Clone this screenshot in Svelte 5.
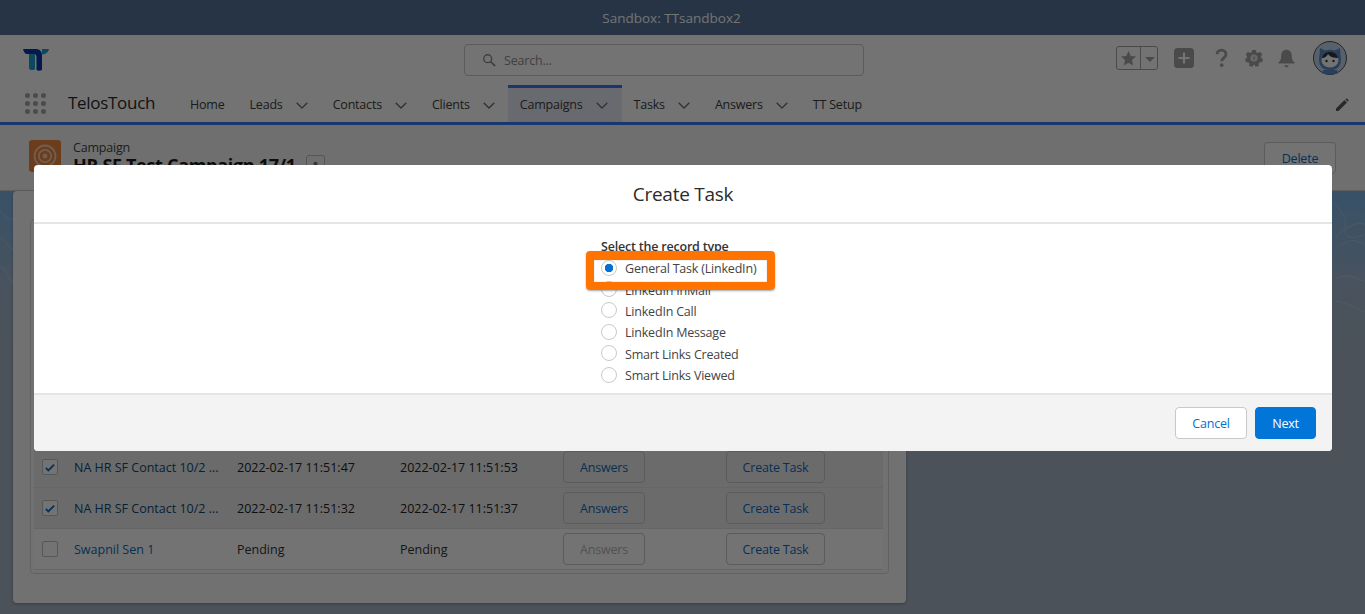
<script>
const navItems = [
    { label: 'Home' },
    { label: 'Leads', menu: true },
    { label: 'Contacts', menu: true },
    { label: 'Clients', menu: true },
    { label: 'Campaigns', menu: true, active: true },
    { label: 'Tasks', menu: true },
    { label: 'Answers', menu: true },
    { label: 'TT Setup' }
];

const members = [
    { name: 'NA HR SF Contact 10/2 ...', sent: '2022-02-17 11:51:47', done: '2022-02-17 11:51:53', checked: true },
    { name: 'NA HR SF Contact 10/2 ...', sent: '2022-02-17 11:51:32', done: '2022-02-17 11:51:37', checked: true },
    { name: 'Swapnil Sen 1', sent: 'Pending', done: 'Pending', checked: false }
];

const recordTypes = [
    'General Task (LinkedIn)',
    'LinkedIn InMail',
    'LinkedIn Call',
    'LinkedIn Message',
    'Smart Links Created',
    'Smart Links Viewed'
];

let recordType = $state(recordTypes[0]);
</script>

<div class="page">
    <svg class="contours" viewBox="0 0 1365 423" preserveAspectRatio="none" aria-hidden="true">
        <g fill="none" stroke="#d5e6f5" stroke-width="1" opacity="0.35">
            <path d="M1335 60c10-14 24-12 32-4" />
            <path d="M1335 46c14-12 22-16 32-12" />
            <path d="M1335 12c8 10 12 18 10 26s6 12 22 4" />
            <path d="M1335 88c12-6 20-2 32 4" />
            <path d="M1335 110c14 2 22 8 32 12" />
            <path d="M0 20c6 6 10 10 13 8" />
            <path d="M0 46c5 2 8 10 13 12" />
            <path d="M0 76c6 0 8 12 13 16" />
        </g>
    </svg>

    <div class="sandbox-bar">Sandbox: TTsandbox2</div>

    <header class="global-header">
        <svg class="logo" viewBox="0 0 27 24" aria-hidden="true">
            <path d="M1 1h13c3 0 6 2 6 6v15c-2 1-4 1-5.500 0V9c0-2-1-3-3-3H4C2.500 5 1.500 3 1 1z" fill="#0a3ab0" />
            <path d="M7 6h4.500c1 0 1.500.6 1.500 1.500V20c0 1-.5 1.800-1.500 2H9c-1-.2-2-1-2-3z" fill="#1b9fd0" />
            <path d="M20 1h7c-.5 2.500-2.500 5-7 5.500z" fill="#1b9fd0" />
        </svg>
        <div class="search">
            <svg viewBox="0 0 16 16" aria-hidden="true">
                <circle cx="6.500" cy="6.500" r="4.500" fill="none" stroke="#8a8a8a" stroke-width="1.600" />
                <path d="M10 10l4.500 4.500" stroke="#8a8a8a" stroke-width="2" stroke-linecap="round" />
            </svg>
            <span>Search...</span>
        </div>
        <div class="tools">
            <div class="favorites">
                <span class="fav-star">
                    <svg viewBox="0 0 16 16" aria-hidden="true"><path d="M8 1l2.100 4.700 5 .5-3.800 3.300 1.100 5L8 11.900 3.600 14.500l1.100-5L.9 6.200l5-.5z" fill="#a5a5a5" /></svg>
                </span>
                <span class="fav-caret"></span>
            </div>
            <svg class="tool plus" viewBox="0 0 20 20" aria-hidden="true">
                <rect width="20" height="20" rx="3.500" fill="#a5a5a5" />
                <path d="M10 4.500v11M4.500 10h11" stroke="#fff" stroke-width="2.200" />
            </svg>
            <svg class="tool help" viewBox="0 0 16 24" aria-hidden="true">
                <path d="M2.500 7.500c0-3 2.500-5.300 5.500-5.300s5.500 2.300 5.500 5.300c0 4.500-5.200 4-5.200 8.500" fill="none" stroke="#a5a5a5" stroke-width="3.400" />
                <circle cx="8.300" cy="20.800" r="2.200" fill="#a5a5a5" />
            </svg>
            <svg class="tool gear" viewBox="0 0 20 20" aria-hidden="true">
                <path d="M8 1h4l.6 2.600 1.900.8L16.800 3l2.400 3-1.600 2.100.3 1.900 2.100 1.200-1 3.600-2.500-.1-1.400 1.500.3 2.600-3.600 1-1.300-2.200h-1l-1.300 2.200-3.600-1 .3-2.600-1.400-1.500-2.500.1-1-3.600L2 10l.3-1.900L.8 6l2.400-3 2.300 1.400 1.900-.8z" fill="#a5a5a5" />
                <circle cx="10" cy="10" r="4" fill="#fff" opacity="0.75" />
                <path d="M10.800 6.800L8.500 10.500h1.600l-.8 2.800 2.300-3.800H10z" fill="#a5a5a5" />
            </svg>
            <svg class="tool bell" viewBox="0 0 20 20" aria-hidden="true">
                <path d="M10 .8c3.500 0 5.500 2.500 5.500 6 0 4 1 5.500 3 7.500v1h-17v-1c2-2 3-3.500 3-7.500 0-3.500 2-6 5.500-6z" fill="#a5a5a5" />
                <path d="M7.800 17h4.400c0 1.300-1 2.200-2.200 2.200S7.800 18.300 7.800 17z" fill="#a5a5a5" />
            </svg>
            <svg class="avatar" viewBox="0 0 34 34" aria-hidden="true">
                <circle cx="17" cy="17" r="16.500" fill="#c4d6ea" stroke="#555" stroke-width="1" />
                <path d="M7 7l5 2.500c3-1 7-1 10 0L27 7l.5 7c1 5 .5 10-3 13-4 3-11 3-15 0-3.500-3-4-8-3-13z" fill="#5d8fc8" />
                <path d="M10 29h14l1 3c-5 2-11 2-16 0z" fill="#5d8fc8" />
                <ellipse cx="17" cy="19.500" rx="8.500" ry="7" fill="#fff" />
                <path d="M9 17c3 0 5-2 6-4 2 3 6 4 10 4-1-4-4-6-8-6s-7 2-8 6z" fill="#2f3640" />
                <circle cx="13.500" cy="20" r="1.200" fill="#2f3640" />
                <circle cx="20.500" cy="20" r="1.200" fill="#2f3640" />
            </svg>
        </div>
    </header>

    <nav class="nav-bar">
        <div class="launcher" aria-hidden="true">
            {#each Array(9) as _}<span></span>{/each}
        </div>
        <span class="app-name">TelosTouch</span>
        <ul class="nav-items">
            {#each navItems as item}
                <li class:active={item.active}>
                    <span>{item.label}</span>
                    {#if item.menu}
                        <svg viewBox="0 0 12 7" aria-hidden="true"><path d="M.7.7L6 6l5.300-5.300" fill="none" stroke="#6e6e6e" stroke-width="1.300" /></svg>
                    {/if}
                </li>
            {/each}
        </ul>
        <svg class="edit" viewBox="0 0 14 14" aria-hidden="true">
            <path d="M1 10.500L9.500 2l2.500 2.500L3.500 13H1zM10.300 1.200l.7-.5c.4-.3.9-.3 1.200 0l1.100 1.100c.3.300.3.800 0 1.200l-.5.700z" fill="#5c5c5c" />
        </svg>
    </nav>

    <section class="record-header">
        <div class="record-icon">
            <svg viewBox="0 0 24 24" aria-hidden="true">
                <circle cx="12" cy="12" r="10.500" fill="none" stroke="#fff" stroke-width="1.800" opacity="0.6" />
                <circle cx="12" cy="12" r="6.200" fill="none" stroke="#fff" stroke-width="1.800" opacity="0.6" />
                <circle cx="12" cy="12" r="2.400" fill="#fff" opacity="0.6" />
            </svg>
        </div>
        <div class="record-title">
            <span class="record-type">Campaign</span>
            <div class="record-name">
                <strong>HR SF Test Campaign 17/1</strong>
                <span class="follow">
                    <svg viewBox="0 0 12 12" aria-hidden="true">
                        <circle cx="6" cy="3" r="2.300" fill="#777" />
                        <path d="M1.500 10c0-3 2-4.500 4.500-4.500s4.500 1.500 4.500 4.500z" fill="#777" />
                    </svg>
                </span>
            </div>
        </div>
        <button class="btn delete">Delete</button>
    </section>

    <main class="card">
        <div class="members">
            {#each members as member}
                <div class="row" class:selected={member.checked}>
                    <span class="checkbox">
                        {#if member.checked}
                            <svg viewBox="0 0 12 10" aria-hidden="true"><path d="M1 5.500l3 3L11 1.500" fill="none" stroke="#0070d2" stroke-width="2.200" /></svg>
                        {/if}
                    </span>
                    <a class="name" href="#top">{member.name}</a>
                    <span class="date">{member.sent}</span>
                    <span class="date">{member.done}</span>
                    <button class="btn answers" disabled={!member.checked}>Answers</button>
                    <button class="btn create">Create Task</button>
                </div>
            {/each}
        </div>
    </main>

    <div class="backdrop">
        <div class="modal">
            <h2>Create Task</h2>
            <div class="modal-body">
                <fieldset>
                    <legend>Select the record type</legend>
                    {#each recordTypes as type}
                        <label>
                            <input type="radio" name="recordType" value={type} bind:group={recordType} />
                            <span>{type}</span>
                        </label>
                    {/each}
                </fieldset>
                <div class="callout"></div>
            </div>
            <div class="modal-footer">
                <button class="btn cancel">Cancel</button>
                <button class="btn next">Next</button>
            </div>
        </div>
    </div>
</div>

<style>
:global(body) {
    margin: 0;
    overflow: hidden;
}

.page {
    position: relative;
    width: 1365px;
    height: 614px;
    overflow: hidden;
    font-family: "Open Sans", "Noto Sans", sans-serif;
    font-size: 12.5px;
    letter-spacing: -0.2px;
    color: #333;
    background: linear-gradient(180deg, #7cb4e6 191px, #a3b8cf 290px, #a6b5c6 340px);
}

.contours {
    position: absolute;
    left: 0;
    top: 191px;
    width: 1365px;
    height: 423px;
}

.sandbox-bar {
    height: 35px;
    display: flex;
    align-items: center;
    justify-content: center;
    box-sizing: border-box;
    padding-right: 22px;
    background: #56739b;
    color: #fff;
    font-size: 13.5px;
    letter-spacing: 0;
    position: relative;
}

.global-header {
    position: relative;
    height: 50px;
    display: flex;
    align-items: flex-start;
    background: #fff;
}

.logo {
    width: 27px;
    height: 24px;
    margin: 13px 0 0 22px;
}

.search {
    position: absolute;
    left: 464px;
    top: 9px;
    display: flex;
    align-items: center;
    gap: 8px;
    padding-left: 17px;
    box-sizing: border-box;
    width: 400px;
    height: 32px;
    border: 1px solid #c9c9c9;
    border-radius: 4px;
    color: #8f8f8f;
}

.search svg {
    width: 14px;
    height: 14px;
}

.tools {
    margin-left: auto;
    display: flex;
    align-items: center;
    height: 46px;
    padding-right: 18px;
}

.favorites {
    display: flex;
    width: 42px;
    height: 24px;
    box-sizing: border-box;
    border: 1px solid #a5a5a5;
    border-radius: 3px;
    margin-right: 16px;
}

.fav-star {
    width: 23px;
    display: flex;
    align-items: center;
    justify-content: center;
    border-right: 1px solid #a5a5a5;
}

.fav-star svg {
    width: 17px;
    height: 17px;
}

.fav-caret {
    align-self: center;
    margin: 2px 0 0 4px;
    width: 0;
    height: 0;
    border: 5px solid transparent;
    border-top: 5px solid #a5a5a5;
    border-bottom: 0;
    flex: none;
}

.tool {
    flex: none;
}

.plus {
    width: 20px;
    height: 20px;
    margin-right: 21px;
}

.help {
    width: 13px;
    height: 20px;
    margin-right: 17px;
}

.gear {
    width: 18px;
    height: 18px;
    margin-right: 14px;
}

.bell {
    width: 19px;
    height: 19px;
    margin-right: 17px;
}

.avatar {
    width: 34px;
    height: 34px;
}

.nav-bar {
    height: 40px;
    box-sizing: border-box;
    display: flex;
    align-items: stretch;
    background: #fff;
    border-bottom: 3px solid #3a78f5;
    position: relative;
}

.launcher {
    width: 21px;
    height: 21px;
    margin: 8px 0 0 25px;
    display: grid;
    grid-template-columns: repeat(3, 5px);
    grid-template-rows: repeat(3, 5px);
    gap: 3px;
}

.launcher span {
    border-radius: 50%;
    background: #a6a6a6;
}

.app-name {
    margin: 6px 0 0 22px;
    font-size: 17px;
    letter-spacing: -0.3px;
    color: #2c2c2c;
    width: 110px;
}

.nav-items {
    display: flex;
    margin: 0;
    padding: 0;
    list-style: none;
}

.nav-items li {
    display: flex;
    align-items: center;
    gap: 13px;
    padding: 1px 13px 0 12px;
    height: 37px;
    box-sizing: border-box;
    color: #3d3d3d;
}

.nav-items li.active {
    background: #e6ecf7;
    border-top: 3px solid #3a78f5;
    padding: 0 14px 1px 12px;
}

.nav-items svg {
    width: 12px;
    height: 7px;
    margin-top: 2px;
}

.edit {
    width: 14px;
    height: 14px;
    position: absolute;
    right: 16px;
    top: 13px;
}

.record-header {
    height: 66px;
    display: flex;
    align-items: flex-start;
    box-sizing: border-box;
    padding: 15px 29px 0;
    background: #f6f6f6;
    border-bottom: 1px solid #d0d0d0;
}

.record-icon {
    width: 32px;
    height: 32px;
    border-radius: 3px;
    background: #f0883f;
    display: flex;
    align-items: center;
    justify-content: center;
    flex: none;
}

.record-icon svg {
    width: 24px;
    height: 24px;
}

.record-title {
    margin-left: 12px;
    display: flex;
    flex-direction: column;
}

.record-type {
    color: #444;
    line-height: 15px;
}

.record-name {
    display: flex;
    gap: 10px;
    align-items: flex-start;
}

.record-name strong {
    font-size: 18px;
    line-height: 21px;
    color: #1c1c1c;
    letter-spacing: -0.3px;
}

.follow {
    width: 19px;
    height: 24px;
    box-sizing: border-box;
    border: 1px solid #bdbdbd;
    border-radius: 3px;
    display: flex;
    justify-content: center;
    padding-top: 5px;
}

.follow svg {
    width: 11px;
    height: 11px;
}

.btn {
    box-sizing: border-box;
    font: inherit;
    letter-spacing: inherit;
    height: 32px;
    border: 1px solid #c9c9c9;
    border-radius: 4px;
    background: transparent;
    color: #0b6cc4;
    padding: 0;
}

.delete {
    margin: 2px 0 0 auto;
    width: 72px;
    background: #fff;
}

.card {
    box-sizing: border-box;
    width: 893px;
    height: 412px;
    margin-left: 13px;
    padding: 28px 17px 29px;
    background: #fafafa;
    border-radius: 4px;
    box-shadow: 0 1px 3px rgba(0, 0, 0, 0.25);
}

.members {
    box-sizing: border-box;
    height: 355px;
    padding: 0 3px 3px;
    border: 1px solid #dadada;
    border-radius: 4px;
    display: flex;
    flex-direction: column;
    justify-content: flex-end;
}

.row {
    height: 41px;
    display: grid;
    grid-template-columns: 16px 163px 163px 163px 163px 99px;
    align-items: center;
    padding-left: 8px;
    box-sizing: border-box;
    border-bottom: 1px solid #e2e2e2;
    background: #fff;
    margin-right: 2px;
}

.row.selected {
    background: #eeeeee;
    color: #222;
}

.name,
.date {
    white-space: nowrap;
    letter-spacing: 0;
}

.name {
    margin-left: 16px;
    color: #0b6cc4;
    text-decoration: none;
}

.date {
    margin-left: 16px;
}

.row.selected .name {
    color: #0d4a78;
}

.checkbox {
    width: 16px;
    height: 16px;
    box-sizing: border-box;
    border: 1px solid #c2c2c2;
    border-radius: 2px;
    background: #fff;
    display: flex;
    align-items: center;
    justify-content: center;
}

.checkbox svg {
    width: 10px;
    height: 9px;
}

.answers {
    margin-left: 16px;
    width: 82px;
}

.answers:disabled {
    color: #b5b5b5;
}

.create {
    margin-left: 16px;
    width: 99px;
}

.backdrop {
    position: absolute;
    inset: 0;
    box-sizing: border-box;
    padding: 165px 33px 0 34px;
    background: rgba(0, 0, 0, 0.55);
}

.modal {
    height: 286px;
    display: flex;
    flex-direction: column;
    background: #fff;
    border-radius: 4px;
    overflow: hidden;
}

.modal h2 {
    margin: 0;
    height: 59px;
    box-sizing: border-box;
    padding-top: 1px;
    display: flex;
    align-items: center;
    justify-content: center;
    border-bottom: 2px solid #e5e5e5;
    font-size: 19px;
    font-weight: 400;
    letter-spacing: -0.25px;
    color: #2b2b2b;
}

.modal-body {
    position: relative;
    flex: 1;
    box-sizing: border-box;
    padding: 14px 0 0 567px;
    min-height: 0;
}

fieldset {
    margin: 0;
    padding: 0;
    border: 0;
}

legend {
    padding: 0 0 1px;
    font-weight: 600;
    line-height: 18px;
    color: #333;
}

label {
    display: flex;
    align-items: center;
    gap: 8px;
    height: 21.400px;
    color: #444;
}

label span {
    margin-top: 2px;
}

input[type="radio"] {
    appearance: none;
    width: 16px;
    height: 16px;
    margin: 0;
    box-sizing: border-box;
    border: 1px solid #c9c9c9;
    border-radius: 50%;
    background: #fff;
}

input[type="radio"]:checked {
    background: radial-gradient(circle, #0070d2 0 4px, #fff 4.500px);
}

.callout {
    position: absolute;
    left: 552px;
    top: 27px;
    width: 189px;
    height: 39px;
    box-sizing: border-box;
    border: solid #ff7300;
    border-width: 9px 8px 8px;
    border-radius: 4px;
    box-shadow: 0 1px 2px rgba(0, 0, 0, 0.35), inset 0 0 1px rgba(0, 0, 0, 0.5);
}

.modal-footer {
    height: 58px;
    display: flex;
    justify-content: flex-end;
    align-items: center;
    gap: 8px;
    box-sizing: border-box;
    padding: 0 16px 0 0;
    background: #f3f3f3;
    border-top: 2px solid #e5e5e5;
}

.cancel {
    width: 72px;
    background: #fff;
    color: #0070d2;
}

.next {
    width: 61px;
    background: #0176d8;
    border-color: #0176d8;
    color: #fff;
}
</style>
